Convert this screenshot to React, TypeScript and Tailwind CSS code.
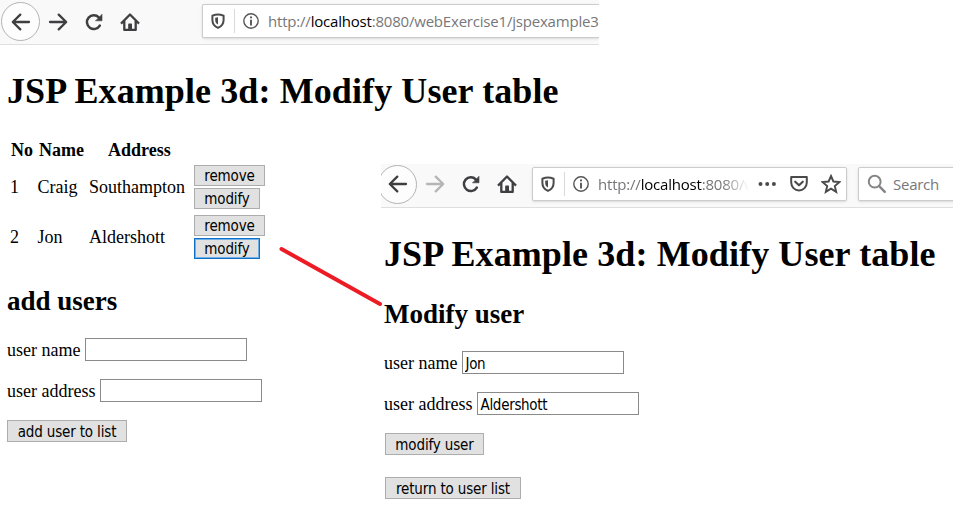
import type { ReactNode } from "react";

const ui = "font-['DejaVu_Sans_Condensed','Noto_Sans',sans-serif]";
const chrome = "font-['Open_Sans','Noto_Sans',sans-serif]";

function Icon({ children, className = "" }: { children: ReactNode; className?: string }) {
  return (
    <svg
      viewBox="0 0 20 20"
      className={`size-5 shrink-0 ${className}`}
      fill="none"
      stroke="currentColor"
      strokeWidth="2.3"
      strokeLinecap="round"
      strokeLinejoin="round"
    >
      {children}
    </svg>
  );
}

function NavIcons({ forwardClass }: { forwardClass: string }) {
  return (
    <div className="flex h-full shrink-0 items-center text-[#3f3f41]">
      <div className="flex size-[39px] shrink-0 items-center justify-center rounded-full border border-[#b4b4b5] bg-[#fdfdfd]">
        <Icon><path d="M18 10H2M9.3 2.6 1.8 10l7.5 7.4" /></Icon>
      </div>
      <Icon className={`ml-[8px] ${forwardClass}`}>
        <path d="M2 10h16M10.7 2.6l7.5 7.4-7.5 7.4" />
      </Icon>
      <Icon className="ml-[16px]">
        <path d="M15.8 13.6A6.9 6.9 0 1 1 14.8 5.3" strokeWidth="2.5" />
        <path d="M18 2.6v6.200h-6.200z" fill="currentColor" strokeWidth="0.6" />
      </Icon>
      <Icon className="ml-[16px]">
        <path d="M1.8 10.8 10 2.5l8.2 8.3M4.3 9.5v8.4h11.4V9.5" strokeLinecap="square" />
        <path d="M8.9 12.3h2.4v5.5H8.9z" fill="currentColor" strokeWidth="1.4" />
      </Icon>
    </div>
  );
}

function SiteIcons() {
  return (
    <>
      <Icon className="ml-[5px] text-[#4b4b4d]">
        <path d="M10 3.6c-2 0-3.8.4-5.6 1.1v4.2c0 4 2 6.4 5.6 8 3.6-1.6 5.6-4 5.6-8V4.7C13.800 4 12 3.600 10 3.600z" strokeWidth="2" />
        <path d="M10 6.200v7.400c-1.900-1-2.800-2.400-2.800-4.500V6.700z" fill="currentColor" stroke="none" />
      </Icon>
      <span className="ml-[6px] h-6 w-px shrink-0 bg-[#d9d9da]" />
      <Icon className="ml-[6px] text-[#555557]">
        <circle cx="10" cy="10" r="7.2" strokeWidth="1.4" />
        <path d="M10 9.500v4.200" strokeWidth="1.900" />
        <path d="M10 6.300v.1" strokeWidth="2" />
      </Icon>
    </>
  );
}

function Button({ children, className }: { children: ReactNode; className: string }) {
  return (
    <button
      className={`flex shrink-0 items-center justify-center whitespace-nowrap border bg-[#e1e1e1] pt-[2px] text-[15px] leading-none tracking-[-0.15px] ${ui} ${className}`}
    >
      {children}
    </button>
  );
}

function Field({ label, value, className }: { label: string; value: string; className: string }) {
  return (
    <label className={`flex h-[23px] items-center ${className}`}>
      {label}
      <input
        defaultValue={value}
        className={`ml-[5px] h-[23px] w-[162px] border border-[#8a8a8a] bg-white px-[2px] pt-[2px] text-[15px] tracking-[-0.3px] ${ui}`}
      />
    </label>
  );
}

function UserRow({ no, name, address, focused }: { no: string; name: string; address: string; focused?: boolean }) {
  return (
    <div className="flex h-11 items-center">
      <span className="w-[27.5px]">{no}</span>
      <span className="w-[51.5px]">{name}</span>
      <span className="w-[105px]">{address}</span>
      <div className="flex flex-col gap-[1px]">
        <Button className="h-[21px] w-[71px] border-[#adadad]">remove</Button>
        <Button className={`mt-px h-[21px] w-[66px] ${focused ? "border-[#0f6fc6] outline outline-1 -outline-offset-2 outline-[#6fb0e8]" : "border-[#adadad]"}`}>modify</Button>
      </div>
    </div>
  );
}

function UserTableWindow() {
  return (
    <section className="col-start-1 row-start-1 h-[513px] w-[599px]">
      <div className="flex h-[45px] items-center overflow-hidden border-b border-[#dfdfe0] bg-[#f9f9fa] pl-px">
        <div className="-mt-px h-full w-[201px] shrink-0"><NavIcons forwardClass="" /></div>
        <div className={`-mt-[2px] flex h-[34px] w-[397px] shrink-0 items-center overflow-hidden rounded-l-[2px] border border-r-0 border-[#ccc] bg-white shadow-sm ${chrome}`}>
          <SiteIcons />
          <span className="ml-[7px] whitespace-nowrap text-[15px] tracking-[-0.2px] text-[#77777a]">
            http://<span className="text-black">localhost</span>:8080/webExercise1/jspexample3
          </span>
        </div>
      </div>
      <div className="pl-[7px]">
        <h1 className="mt-[26px] h-10 text-[36px] font-bold leading-10 tracking-[0.1px]">JSP Example 3d: Modify User table</h1>
        <div className="mt-[29px] flex h-5 items-center pl-[4px] font-bold">
          <span className="w-[28px]">No</span>
          <span className="w-[69px]">Name</span>
          <span>Address</span>
        </div>
        <div className="mt-[5px] flex flex-col gap-[6px] pl-[3px]">
          <UserRow no="1" name="Craig" address="Southampton" />
          <UserRow no="2" name="Jon" address="Aldershott" focused />
        </div>
        <h2 className="mt-[27px] h-[30px] text-[27px] font-bold leading-[30px]">add users</h2>
        <Field className="mt-[22px]" label="user name" value="" />
        <Field className="mt-[18px]" label="user address" value="" />
        <Button className="mt-[18px] h-[22px] w-[120px] border-[#adadad]">add user to list</Button>
      </div>
    </section>
  );
}

function ModifyUserWindow() {
  return (
    <section className="col-start-1 row-start-1 ml-[381px] mt-[164px] h-[349px] w-[572px] overflow-hidden bg-white">
      <div className="flex h-[44px] items-center overflow-hidden border-b border-[#dfdfe0] bg-[#f9f9fa]">
        <div className="-ml-[3px] -mt-[3px] h-full w-[154px] shrink-0"><NavIcons forwardClass="text-[#b5b5b6]" /></div>
        <div className={`-mt-[4px] flex h-[34px] w-[315px] shrink-0 items-center rounded-[2px] border border-[#ccc] bg-white shadow-sm ${chrome}`}>
          <SiteIcons />
          <span className="ml-[7px] w-[152px] overflow-hidden whitespace-nowrap text-[15px] tracking-[-0.2px] text-[#77777a] [mask-image:linear-gradient(to_right,#000_125px,transparent_151px)]">
            http://<span className="text-black">localhost</span>:8080/w
          </span>
          <Icon className="ml-[7px] text-[#4b4b4d]">
            <path d="M3.500 10v.01M10.200 10v.01M16.900 10v.01" strokeWidth="4" />
          </Icon>
          <Icon className="ml-[12px] text-[#4b4b4d]">
            <path d="M2.200 3h15.600v5.600a7.800 7.800 0 0 1-15.600 0z" strokeWidth="2" />
            <path d="m6.200 7.700 3.800 3.500 3.800-3.500" strokeWidth="2.200" />
          </Icon>
          <Icon className="ml-[12px] text-[#4b4b4d]">
            <path d="m10 2 2.400 5.500 5.900.6-4.500 3.900 1.400 5.900-5.200-3.200-5.200 3.200 1.400-5.900-4.500-3.900 5.900-.6z" strokeWidth="1.900" strokeLinejoin="miter" />
          </Icon>
        </div>
        <div className={`-mt-[4px] ml-[11px] flex h-[34px] w-[120px] shrink-0 items-center rounded-[2px] border border-[#ccc] bg-white shadow-sm ${chrome}`}>
          <Icon className="ml-[8px] text-[#858587]">
            <circle cx="7.700" cy="7.700" r="5.900" strokeWidth="2" />
            <path d="m12.200 12.200 5.600 5.600" strokeWidth="2.400" />
          </Icon>
          <span className="ml-[6px] text-[15px] tracking-[-0.25px] text-[#77777a]">Search</span>
        </div>
      </div>
      <div className="pl-[3px]">
        <h1 className="mt-[26px] h-10 whitespace-nowrap text-[36px] font-bold leading-10 tracking-[0.1px]">JSP Example 3d: Modify User table</h1>
        <h2 className="mt-[25px] h-[30px] text-[27px] font-bold leading-[30px]">Modify user</h2>
        <Field className="mt-[22px]" label="user name" value="Jon" />
        <Field className="mt-[18px]" label="user address" value="Aldershott" />
        <Button className="ml-px mt-[18px] h-[22px] w-[99px] border-[#adadad]">modify user</Button>
        <Button className="ml-px mt-[22px] h-[22px] w-[136px] border-[#adadad]">return to user list</Button>
      </div>
    </section>
  );
}

export default function App() {
  return (
    <main className="relative grid h-[513px] w-[953px] overflow-hidden bg-white font-['Liberation_Serif',serif] text-[18px] leading-5 text-black">
      <UserTableWindow />
      <ModifyUserWindow />
      <svg className="pointer-events-none absolute left-0 top-0 h-[513px] w-[953px]" viewBox="0 0 953 513">
        <path d="M281.500 249 380 304" stroke="#ed1c24" strokeWidth="4" strokeLinecap="round" />
      </svg>
    </main>
  );
}
